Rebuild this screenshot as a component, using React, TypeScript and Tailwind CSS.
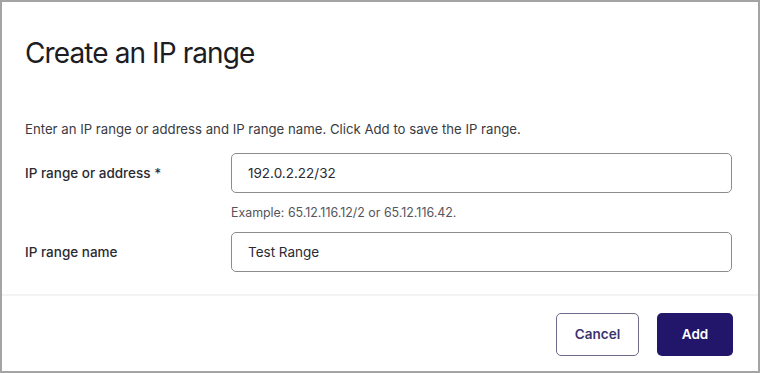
import React from "react";

export default function App() {
  return (
    <div className="w-[760px] h-[373px] bg-white border-2 border-[#a4a4a4] flex flex-col" style={{ fontFamily: "Inter, 'Liberation Sans', sans-serif" }}>
      <div className="pl-[23px] pt-[31px] h-[92px]">
        <h1 className="text-[28px] leading-[40px] text-[#1c1c22] tracking-[-0.9px]">Create an IP range</h1>
      </div>
      <div className="pl-[23px] pr-[26px] flex flex-col">
        <p className="text-[13.2px] leading-[20px] text-[#3a3a42] mt-[25px]">
          Enter an IP range or address and IP range name. Click Add to save the IP range.
        </p>
        <div className="flex items-center mt-[14px]">
          <label className="w-[206px] text-[13.5px] font-medium text-[#2a2a33]">IP range or address *</label>
          <div className="flex-1 h-[40px] border border-[#8c8c8c] rounded-[5px] flex items-center pl-[16px] text-[13.5px] text-[#2a2a33]">192.0.2.22/32</div>
        </div>
        <p className="ml-[206px] mt-[12px] text-[12.4px] leading-[16px] text-[#55555c]">Example: 65.12.116.12/2 or 65.12.116.42.</p>
        <div className="flex items-center mt-[11px]">
          <label className="w-[206px] text-[13.5px] font-medium text-[#2a2a33]">IP range name</label>
          <div className="flex-1 h-[40px] border border-[#8c8c8c] rounded-[5px] flex items-center pl-[16px] text-[13.5px] text-[#2a2a33]">Test Range</div>
        </div>
      </div>
      <div className="mt-[22px] border-t-2 border-[#f3f3f3] flex justify-end items-start pt-[17px] pr-[25px] gap-[18px]">
        <button className="w-[83px] h-[43px] rounded-[5px] border border-[#6e6a8a] bg-white text-[13.5px] font-semibold text-[#3a356e]">Cancel</button>
        <button className="w-[76px] h-[43px] rounded-[5px] bg-[#22166a] text-[13.5px] font-semibold text-white">Add</button>
      </div>
    </div>
  );
}
